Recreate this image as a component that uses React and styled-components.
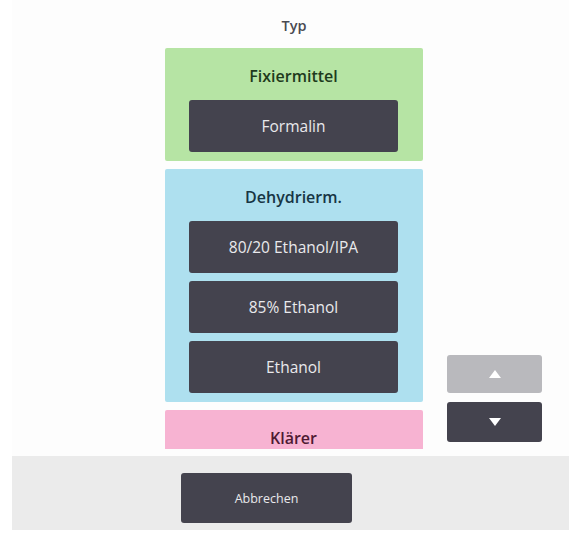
import React from 'react';
import styled, { createGlobalStyle } from 'styled-components';

const Global = createGlobalStyle`
  html, body { margin: 0; padding: 0; background: #ffffff; }
  body { font-family: "Open Sans", "Liberation Sans", sans-serif; }
`;

const Page = styled.div`
  width: 569px;
  height: 534px;
  background: #ffffff;
  padding-left: 12px;
  box-sizing: border-box;
  display: flex;
  flex-direction: column;
  overflow: hidden;
`;

const Content = styled.div`
  height: 456px;
  background: #fdfdfd;
  display: grid;
  grid-template-columns: 258px 95px;
  column-gap: 24px;
  padding-left: 153px;
  box-sizing: border-box;
`;

const Column = styled.div`
  display: flex;
  flex-direction: column;
  height: 449px;
  overflow: hidden;
`;

const Title = styled.div`
  height: 48px;
  display: flex;
  align-items: center;
  justify-content: center;
  padding-top: 2px;
  box-sizing: border-box;
  font-size: 14.5px;
  font-weight: 600;
  color: #4a4a52;
  flex-shrink: 0;
`;

const List = styled.div`
  display: flex;
  flex-direction: column;
  gap: 8px;
`;

const Group = styled.div`
  background: ${p => p.$bg};
  border-radius: 2px;
  padding: 0 25px 9px 24px;
  display: flex;
  flex-direction: column;
  gap: 8px;
  flex-shrink: 0;
  min-height: ${p => p.$min || 0}px;
`;

const GroupLabel = styled.div`
  height: 52px;
  margin-bottom: -8px;
  padding-top: 4px;
  box-sizing: border-box;
  display: flex;
  align-items: center;
  justify-content: center;
  font-size: 16px;
  font-weight: 600;
  color: ${p => p.$color};
`;

const Item = styled.button`
  height: 52px;
  border: none;
  border-radius: 3px;
  background: #44434e;
  color: #e9e9ec;
  font-family: inherit;
  font-size: 15.5px;
  font-weight: 500;
  padding: 0;
  cursor: pointer;
`;

const Arrows = styled.div`
  align-self: end;
  margin-bottom: 14px;
  display: flex;
  flex-direction: column;
  gap: 9px;
`;

const ArrowButton = styled.button`
  width: 95px;
  height: ${p => p.$h}px;
  border: none;
  border-radius: 3px;
  background: ${p => (p.$disabled ? '#b9b9bd' : '#44434e')};
  display: flex;
  align-items: center;
  justify-content: center;
  padding: 0;
`;

const Footer = styled.div`
  height: 74px;
  background: #ebebeb;
  padding: 17px 0 0 169px;
  box-sizing: border-box;
`;

const CancelButton = styled.button`
  width: 171px;
  height: 50px;
  border: none;
  border-radius: 3px;
  background: #44434e;
  color: #e9e9ec;
  font-family: inherit;
  font-size: 12.5px;
  font-weight: 500;
  padding: 0;
`;

const Triangle = ({ up }) => (
  <svg width="12" height="8" viewBox="0 0 12 8">
    <polygon points={up ? '6,0 12,8 0,8' : '0,0 12,0 6,8'} fill="#ffffff" />
  </svg>
);

const groups = [
  { label: 'Fixiermittel', bg: '#b6e4a4', color: '#1e3a1c', items: ['Formalin'] },
  { label: 'Dehydrierm.', bg: '#aee0ef', color: '#173544', items: ['80/20 Ethanol/IPA', '85% Ethanol', 'Ethanol'] },
  { label: 'Klärer', bg: '#f7b3d2', color: '#4e1a32', items: [], min: 60 },
];

export default function App() {
  return (
    <>
      <Global />
      <Page>
        <Content>
          <Column>
            <Title>Typ</Title>
            <List>
              {groups.map(g => (
                <Group key={g.label} $bg={g.bg} $min={g.min}>
                  <GroupLabel $color={g.color}>{g.label}</GroupLabel>
                  {g.items.map(i => <Item key={i}>{i}</Item>)}
                </Group>
              ))}
            </List>
          </Column>
          <Arrows>
            <ArrowButton $h={38} $disabled><Triangle up /></ArrowButton>
            <ArrowButton $h={40}><Triangle /></ArrowButton>
          </Arrows>
        </Content>
        <Footer>
          <CancelButton>Abbrechen</CancelButton>
        </Footer>
      </Page>
    </>
  );
}
